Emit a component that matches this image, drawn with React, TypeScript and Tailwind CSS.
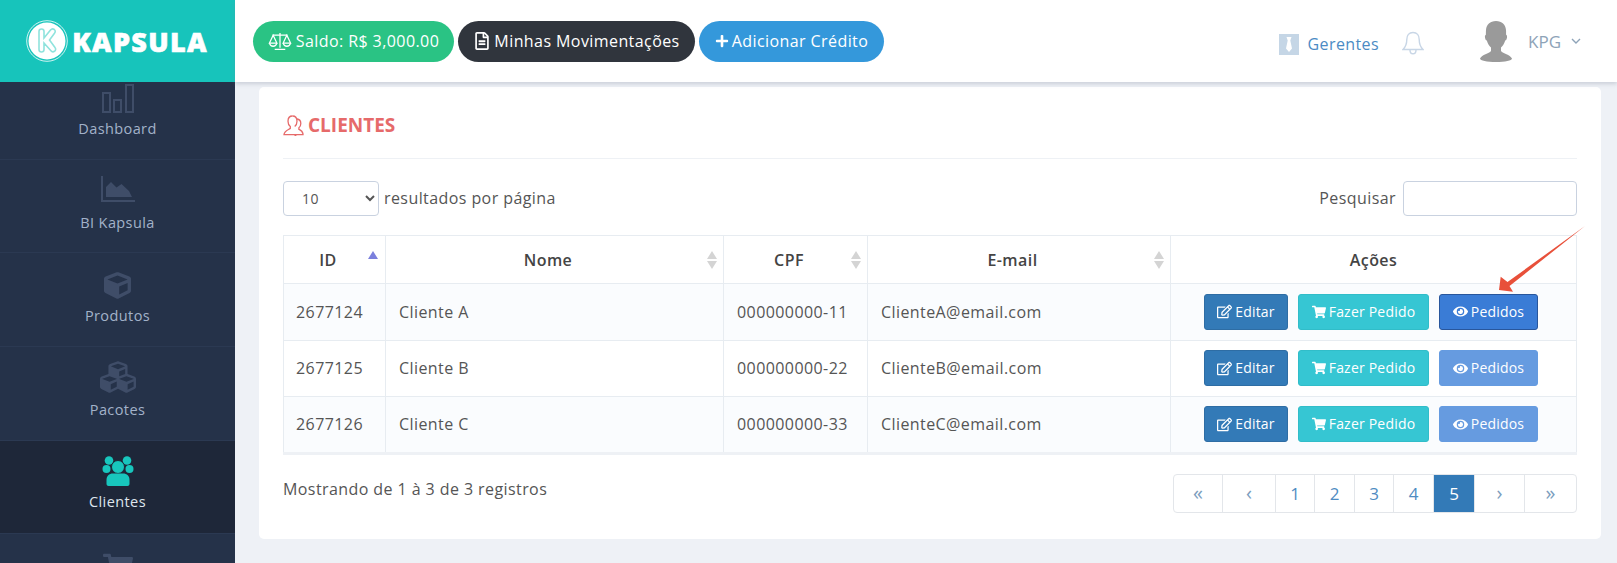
import React from "react";
import { FaCube, FaCubes, FaEye, FaPlus, FaRegEdit, FaRegFileAlt, FaShoppingCart } from "react-icons/fa";

const iconColor = "#3f4d68";

function BarsIcon() {
  return (
    <svg width="32" height="29" viewBox="0 0 32 29" fill="none" stroke={iconColor} strokeWidth="2">
      <rect x="1" y="9" width="7" height="19" />
      <rect x="12" y="16" width="7" height="12" />
      <rect x="24" y="1" width="7" height="27" />
    </svg>
  );
}

function AreaIcon() {
  return (
    <svg width="34" height="26" viewBox="0 0 34 26" fill={iconColor} className="mb-[6px]">
      <path d="M0 0h2v24h32v2H0z" />
      <path d="M5 21V11l5-5 5.500 5.500 5-3.500L28 15l3 6z" />
    </svg>
  );
}

function PeopleIcon() {
  return (
    <svg width="32" height="30" viewBox="0 0 32 30" fill="#18c6bd">
      <circle cx="7" cy="4.500" r="4.300" />
      <circle cx="25" cy="4.500" r="4.300" />
      <circle cx="4.500" cy="13" r="4" />
      <circle cx="27.500" cy="13" r="4" />
      <circle cx="16" cy="11" r="6.500" stroke="#1e2739" strokeWidth="1" />
      <path d="M4.500 28V24C4.500 20 7 17.500 11 17.500H21C25 17.500 27.500 20 27.500 24V28C27.500 29 26.500 30 25.500 30H6.500C5.500 30 4.500 29 4.500 28Z" />
    </svg>
  );
}

function ScaleIcon() {
  return (
    <svg width="24" height="19" viewBox="0 0 22 18" fill="none" stroke="#fff" strokeWidth="1.200" className="mr-[4px]">
      <path d="M11 1v14M6 16.500h10M4 3h14" />
      <path d="M4.500 3 1 10.500h7zM17.500 3 14 10.500h7z" />
      <path d="M1 10.500c.5 2 2 3 3.500 3s3-1 3.500-3M14 10.500c.5 2 2 3 3.500 3s3-1 3.500-3" />
    </svg>
  );
}

function TieIcon() {
  return (
    <svg width="20" height="21" viewBox="0 0 20 21">
      <rect width="20" height="21" fill="#c5d6e6" />
      <path d="M7.500 3h5l-1.200 3.500 1.700 8-3 3.500-3-3.500 1.700-8z" fill="#fff" />
    </svg>
  );
}

function BellIcon() {
  return (
    <svg width="22" height="24" viewBox="0 0 22 24" fill="none" stroke="#c8d6e6" strokeWidth="1.400">
      <path d="M11 1.500C7 1.500 4.800 4.500 4.800 8.500c0 5-1.300 7.500-3.800 10h20c-2.500-2.500-3.800-5-3.800-10 0-4-2.200-7-6.200-7z" />
      <path d="M8 19c0 2.500 1.300 3.800 3 3.800s3-1.300 3-3.800" />
    </svg>
  );
}

function AvatarIcon() {
  return (
    <svg width="32" height="41" viewBox="0 0 32 41" fill="#9a9a9a">
      <path d="M16 0c6 0 9.500 3.500 10 9 .2 2 0 3.500.2 5 .8 0 1 1 .8 2.500-.3 2-.9 3-1.800 3-1 3.500-2.500 5.500-4.200 7v3.500c2 2.500 9 3.500 11 7.500 0 2-7 3.500-16 3.500S0 39.500 0 37.500c2-4 9-5 11-7.500v-3.500c-1.700-1.500-3.200-3.500-4.200-7-.9 0-1.500-1-1.800-3-.2-1.500 0-2.500.8-2.500.2-1.500 0-3 .2-5C6.500 3.500 10 0 16 0z" />
    </svg>
  );
}

function ChevronDown() {
  return (
    <svg width="10" height="7" viewBox="0 0 10 7" fill="none" stroke="#8ea3b8" strokeWidth="1.400">
      <path d="M1 1l4 4 4-4" />
    </svg>
  );
}

function UserOutline() {
  return (
    <svg width="21" height="21" viewBox="0 0 21 21" fill="none" stroke="#e66a6a" strokeWidth="1.300" className="mr-[4px]">
      <path d="M9.500 1C6.500 1 5 3.300 5 6.200c0 2.300 1 4.300 2.300 5.400v1.800C5 15 1.500 15.600 1 19.600h12.500" />
      <path d="M9.500 1c2.800 0 4.500 2.200 4.500 5.200 0 2.300-1 4.300-2.300 5.400" />
      <path d="M14 4c2.500.3 3.800 2.200 3.800 4.500 0 1.800-.8 3.500-1.900 4.300v1.500c1.700.8 3.600 1.600 4.100 4.500v.8h-6.500c-.7 1-1 1-2 1" />
    </svg>
  );
}

function LogoMark() {
  return (
    <svg width="42" height="42" viewBox="0 0 42 42">
      <circle cx="21" cy="21" r="20.300" fill="none" stroke="#fff" strokeWidth="0.800" />
      <circle cx="21" cy="21" r="18.500" fill="#fff" />
      <path d="M13 11.500c0-1.500 1-2.500 2.500-2.500S18 10 18 11.500V18l6.500-8c1-1.200 2.500-1.500 3.800-.5 1.200 1 1.200 2.500.2 3.700L23.500 20l5.500 7.500c1 1.300.8 3-.5 3.800-1.300.8-2.800.5-3.800-.8L18 23v6.500c0 1.500-1 2.500-2.500 2.500S13 31 13 29.500z" fill="none" stroke="#8fe3dd" strokeWidth="1.600" />
    </svg>
  );
}

function SortArrows({ active }: { active?: boolean }) {
  if (active) {
    return (
      <svg width="10" height="8" viewBox="0 0 10 8" className="absolute right-[7px] top-[15px]">
        <path d="M5 0l5 8H0z" fill="#7b80dd" />
      </svg>
    );
  }
  return (
    <svg width="10" height="18" viewBox="0 0 10 18" className="absolute right-[6px] top-[15px]">
      <path d="M5 0l5 8H0z" fill="#d4d4d4" />
      <path d="M5 18l5-8H0z" fill="#d4d4d4" />
    </svg>
  );
}

const navItems = [
  { label: "Dashboard", icon: <BarsIcon /> },
  { label: "BI Kapsula", icon: <AreaIcon /> },
  { label: "Produtos", icon: <FaCube size={27} color={iconColor} /> },
  { label: "Pacotes", icon: <FaCubes size={36} color={iconColor} className="mb-[6px]" /> },
  { label: "Clientes", icon: <PeopleIcon />, active: true },
  { label: "", icon: <FaShoppingCart size={30} color={iconColor} /> },
];

const rows = [
  { id: "2677124", nome: "Cliente A", cpf: "000000000-11", email: "ClienteA@email.com", focus: true },
  { id: "2677125", nome: "Cliente B", cpf: "000000000-22", email: "ClienteB@email.com" },
  { id: "2677126", nome: "Cliente C", cpf: "000000000-33", email: "ClienteC@email.com" },
];

const pages = [
  { t: "«", w: "w-[49px]" },
  { t: "‹", w: "w-[53px]" },
  { t: "1", w: "w-[39px]" },
  { t: "2", w: "w-[40px]" },
  { t: "3", w: "w-[39px]" },
  { t: "4", w: "w-[40px]" },
  { t: "5", w: "w-[41px]", active: true },
  { t: "›", w: "w-[50px]" },
  { t: "»", w: "w-[51px]" },
];

export default function App() {
  return (
    <div className="relative flex h-[563px] w-full overflow-hidden bg-[#eef1f6] font-['Open_Sans',sans-serif] text-[#555]">
      <aside className="flex w-[235px] shrink-0 flex-col overflow-hidden bg-[#253249]">
        <div className="relative z-10 flex h-[82px] shrink-0 items-center justify-center gap-[4px] bg-[#17c4bb] pr-[1px]">
          <LogoMark />
          <span className="text-[27px] leading-none font-extrabold tracking-[1.300px] text-white [-webkit-text-stroke:0.6px_white]">KAPSULA</span>
        </div>
        <nav className="mt-[-16px] flex flex-col">
          {navItems.map((item) => (
            <div
              key={item.label}
              className={`flex h-[93.700px] shrink-0 flex-col items-center border-b border-[#2b3952] ${item.active ? "bg-[#1e2739] pt-[15px] text-[#dfe6ee]" : "pt-[17px] text-[#a3b2c9]"}`}
            >
              <div className="flex h-[31px] items-center justify-center">{item.icon}</div>
              {item.label && <span className="mt-[5px] text-[14.500px] leading-[20px] tracking-[0.4px]">{item.label}</span>}
            </div>
          ))}
        </nav>
      </aside>

      <div className="flex min-w-0 flex-1 flex-col">
        <header className="relative z-10 flex h-[82px] shrink-0 items-center bg-white pl-[18px] pr-[36px] shadow-[0_2px_4px_rgba(120,130,150,0.3)]">
          <div className="flex items-center gap-[4px] text-[16px] leading-none tracking-[0.42px] text-white">
            <div className="flex h-[41px] w-[201px] items-center justify-center rounded-full bg-[#2ac384]">
              <ScaleIcon />
              Saldo: R$ 3,000.00
            </div>
            <div className="flex h-[41px] w-[237px] items-center justify-center gap-[3px] rounded-full bg-[#30353d]">
              <FaRegFileAlt size={18} />
              Minhas Movimentações
            </div>
            <div className="flex h-[41px] w-[185px] items-center justify-center gap-[3px] rounded-full bg-[#3498db]">
              <FaPlus size={14} />
              Adicionar Crédito
            </div>
          </div>
          <div className="ml-auto flex items-center">
            <div className="mt-[6px] flex items-center gap-[9px]">
              <TieIcon />
              <span className="text-[16px] tracking-[0.4px] text-[#4b8bc4]">Gerentes</span>
            </div>
            <div className="ml-[23px] mt-[4px]">
              <BellIcon />
            </div>
            <div className="ml-[56px]">
              <AvatarIcon />
            </div>
            <span className="ml-[16px] text-[17px] leading-none text-[#8ea3b8]">KPG</span>
            <div className="ml-[10px]">
              <ChevronDown />
            </div>
          </div>
        </header>

        <main className="min-h-0 flex-1 pl-[24px] pr-[16px] pt-[5px]">
          <section className="h-[452px] rounded-[5px] bg-white px-[24px] pt-[1px] text-[16px] tracking-[0.42px]">
            <div className="flex h-[71px] items-center border-b border-[#eef1f5] pt-[5px]">
              <UserOutline />
              <h1 className="text-[19px] leading-none font-bold tracking-normal text-[#e66a6a]">CLIENTES</h1>
            </div>

            <div className="mt-[22px] flex h-[35px] items-center justify-between">
              <div className="flex items-center gap-[5px]">
                <select className="h-[35px] w-[96px] rounded-[4px] border border-[#c9d2e0] bg-white pl-[14px] text-[14px] text-[#555]">
                  <option>10</option>
                </select>
                <span className="mb-[1px]">resultados por página</span>
              </div>
              <div className="flex items-center gap-[7px]">
                <span className="mb-[1px]">Pesquisar</span>
                <input className="h-[35px] w-[174px] rounded-[4px] border border-[#c9d2e0] bg-white" />
              </div>
            </div>

            <table className="mt-[19px] w-[1293px] table-fixed border-collapse border-b-[3px] border-b-[#eef1f5]">
              <colgroup>
                <col className="w-[102px]" />
                <col className="w-[338px]" />
                <col className="w-[144px]" />
                <col className="w-[303px]" />
                <col className="w-[406px]" />
              </colgroup>
              <thead>
                <tr className="h-[48px] text-[#444]">
                  {["ID", "Nome", "CPF", "E-mail", "Ações"].map((h, i) => (
                    <th key={h} className="relative border border-[#e7ecf1] pr-[13px] text-center font-semibold last:pr-0">
                      {h}
                      {i < 4 && <SortArrows active={i === 0} />}
                    </th>
                  ))}
                </tr>
              </thead>
              <tbody>
                {rows.map((r, i) => (
                  <tr key={r.id} className={`h-[56.600px] ${i === 1 ? "bg-white" : "bg-[#fafcfe]"}`}>
                    <td className="border border-[#e7ecf1] px-[12px]">{r.id}</td>
                    <td className="border border-[#e7ecf1] px-[13px]">{r.nome}</td>
                    <td className="border border-[#e7ecf1] px-[13px]">{r.cpf}</td>
                    <td className="border border-[#e7ecf1] px-[13px]">{r.email}</td>
                    <td className="border border-[#e7ecf1] px-0">
                      <div className="flex items-center gap-[10px] pl-[33px] text-[14px] leading-none tracking-[0.2px] text-white">
                        <button className="flex h-[36px] w-[84px] items-center justify-center gap-[3px] rounded-[3px] border border-[#2e6da4] bg-[#337ab7]">
                          <FaRegEdit size={15} />
                          Editar
                        </button>
                        <button className="flex h-[36px] w-[131px] items-center justify-center gap-[3px] rounded-[3px] border border-[#31bdc9] bg-[#36c6d3]">
                          <FaShoppingCart size={14} />
                          Fazer Pedido
                        </button>
                        <button
                          className={`flex h-[36px] w-[99px] items-center justify-center gap-[3px] rounded-[3px] border ${r.focus ? "border-[#28569c] bg-[#3a7cd6]" : "border-[#659be0] bg-[#669be0]"}`}
                        >
                          <FaEye size={15} />
                          Pedidos
                        </button>
                      </div>
                    </td>
                  </tr>
                ))}
              </tbody>
            </table>

            <div className="mt-[19px] flex items-start justify-between">
              <span className="mt-[3px]">Mostrando de 1 à 3 de 3 registros</span>
              <div className="flex h-[39px] overflow-hidden rounded-[4px] border border-[#e3e6ea] text-[17px] tracking-normal text-[#4f8cc2]">
                {pages.map((p, i) => (
                  <div
                    key={p.t}
                    className={`flex items-center justify-center ${p.w} ${i < pages.length - 1 ? "border-r border-[#e3e6ea]" : ""} ${p.active ? "bg-[#337ab7] text-white" : ""} ${["«", "‹", "›", "»"].includes(p.t) ? "text-[20px] text-[#7b9dbd]" : ""}`}
                  >
                    {p.t}
                  </div>
                ))}
              </div>
            </div>
          </section>
        </main>
      </div>

      <svg width="92" height="70" viewBox="0 0 92 70" className="pointer-events-none absolute left-[1497px] top-[225px]">
        <path d="M88 1 10.500 57 3.700 51.700 2 65 16 66.700 12.500 61z" fill="#e8503a" />
      </svg>
    </div>
  );
}
